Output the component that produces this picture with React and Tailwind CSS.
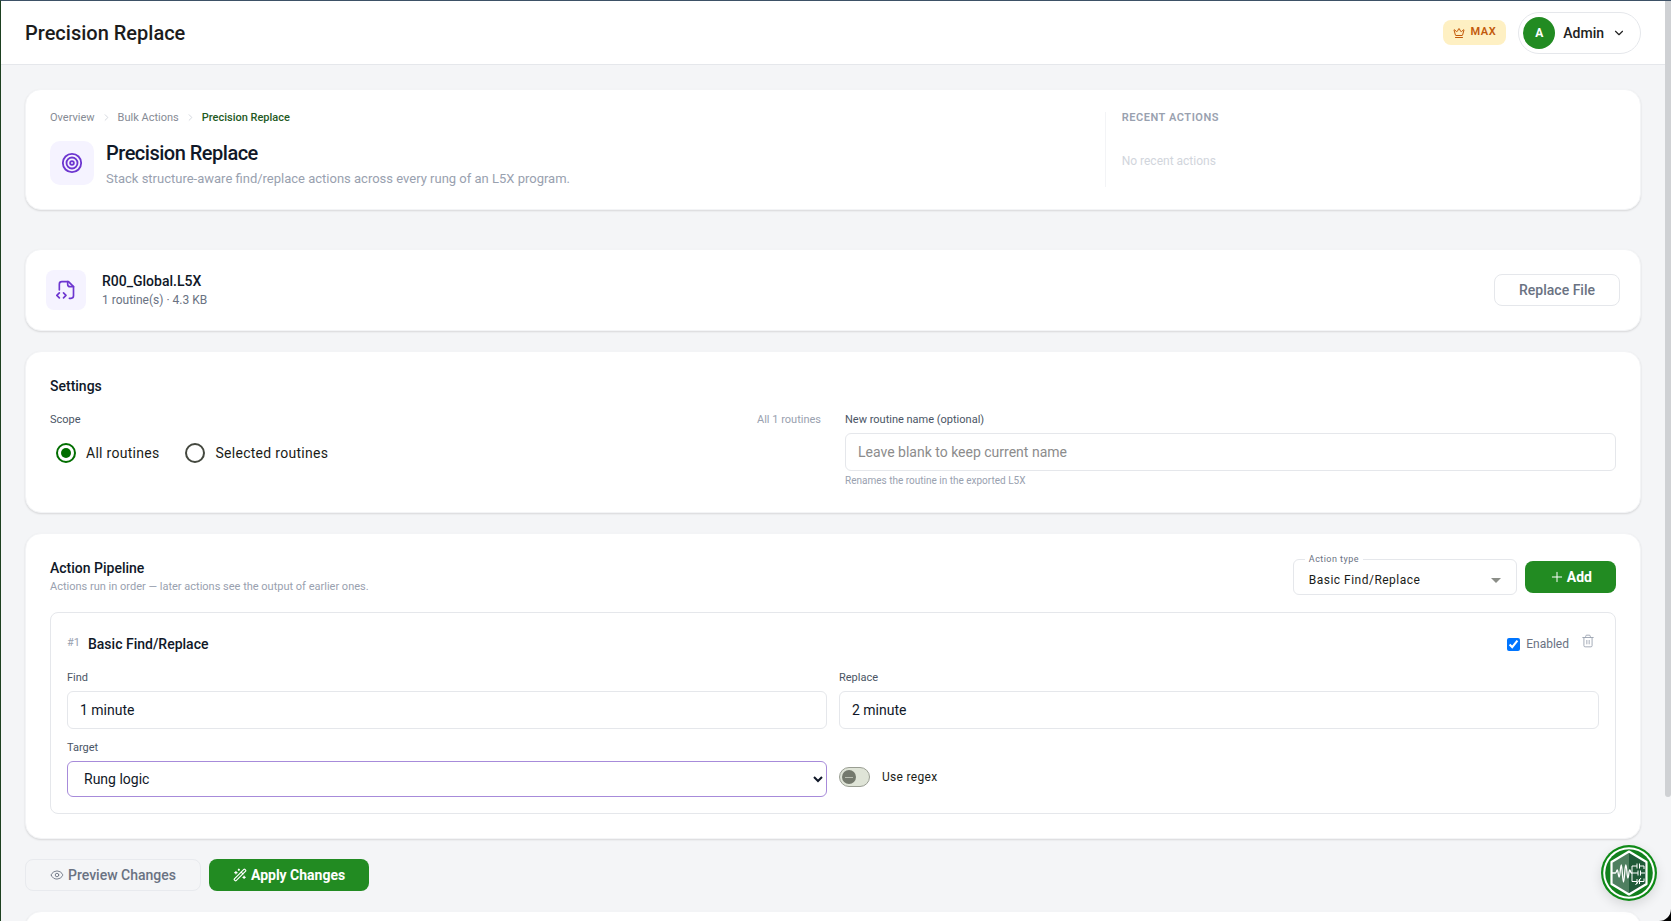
import { useState } from 'react';
import { ChevronDown, ChevronRight, Crown, Eye, Plus, Target, Trash2, WandSparkles } from 'lucide-react';

const CRUMBS = ['Overview', 'Bulk Actions'];

const ACTION_TYPES = ['Basic Find/Replace', 'Regex Replace', 'Increment Address'];
const TARGETS = ['Rung logic', 'Rung comments', 'Tag names'];

const CARD = 'rounded-2xl border border-gray-100 bg-white shadow-[0_1px_2px_rgba(0,0,0,0.12)]';
const LABEL = 'text-[11px] leading-4 text-gray-600';
const INPUT =
  'mt-[5px] block h-[38px] w-full rounded-md border border-gray-200 bg-white px-3 text-sm text-gray-900 outline-none placeholder:text-[#8c8c8c]';

function FileCodeIcon({ className }) {
  return (
    <svg className={className} viewBox="0 0 24 24" fill="none" stroke="currentColor" strokeWidth="2" strokeLinecap="round" strokeLinejoin="round">
      <path d="M4 12V5a3 3 0 0 1 3-3h8l6 6v11a3 3 0 0 1-3 3h-2" />
      <path d="M14 2v3a3 3 0 0 0 3 3h4" />
      <path d="m4 15.500-3 3 3 3" />
      <path d="m9 21.500 3-3-3-3" />
    </svg>
  );
}

function AssistantLogo() {
  return (
    <svg className="size-14" viewBox="0 0 56 56" fill="none">
      <circle cx="28" cy="28" r="28" fill="#0f8a17" />
      <circle cx="28" cy="28" r="25.800" fill="#fff" />
      <circle cx="28" cy="28" r="23.800" fill="#12801d" />
      <path d="M28 7 45.500 17v22L28 49 10.500 39V17z" fill="#4f7f60" />
      <path d="M28 7 45.500 17v22L28 49z" fill="#1f5a38" />
      <path d="M28 6.500 45.500 17v22L28 49.500 10.500 39V17z" stroke="#fff" strokeWidth="2.200" strokeLinejoin="round" />
      <path
        d="M11 28h3.500c1 0 1-3 1.800-3s1 7 1.900 7 1.200-12 2.100-12 1.200 17 2.200 17 1.300-17 2.300-17 1.200 13 2.100 13 .9-8 1.800-8 .8 3 1.600 3H31"
        stroke="#fff"
        strokeWidth="1.300"
        strokeLinejoin="round"
      />
      <path
        d="M31 28v-7h5m2.500 0H43v3M36 18.500v5m2.500-5v5M31 28h6m2.500 0H44M37 25.500v5m2.500-5v5M31 28v8.500h5m2.500 0H43v-3M36 34v5m2.500-5v5M34.500 40l5.500-7"
        stroke="#fff"
        strokeWidth="1"
      />
    </svg>
  );
}

function TopBar() {
  return (
    <header className="flex h-16 shrink-0 items-center justify-between border-b border-gray-200 bg-white px-6">
      <h1 className="text-xl font-medium text-[#1c1c1c]">Precision Replace</h1>
      <div className="flex items-center gap-3">
        <span className="flex h-[25px] items-center gap-1.5 rounded-lg bg-[#fef0c3] px-2.5 text-[11px] font-semibold tracking-wider text-[#c2590b]">
          <Crown className="size-3" />
          MAX
        </span>
        <button className="flex h-[42px] items-center gap-2 rounded-full border border-gray-200 pr-3.5 pl-1 text-sm font-medium text-[#222]">
          <span className="flex size-8 items-center justify-center rounded-full bg-[#228b22] text-xs font-bold text-white">A</span>
          Admin
          <ChevronDown className="size-3.5" />
        </button>
      </div>
    </header>
  );
}

function PageHeader() {
  return (
    <section className={`${CARD} grid grid-cols-[2fr_1fr] gap-8 px-6`}>
      <div className="py-5">
        <nav className="mb-4 flex items-center gap-1.5 text-[11px] leading-[15px] text-gray-400">
          {CRUMBS.map((crumb) => (
            <span key={crumb} className="flex items-center gap-1.5">
              <a href="#" className="text-[#868b95]">{crumb}</a>
              <ChevronRight className="size-[11px] text-gray-300" />
            </span>
          ))}
          <span className="font-medium text-[#1f5a24]">Precision Replace</span>
        </nav>
        <div className="flex items-start gap-3">
          <div className="flex size-11 items-center justify-center rounded-[10px] bg-[#f5f3ff] text-[#6d36d0]">
            <Target className="size-[22px]" />
          </div>
          <div>
            <h2 className="text-xl leading-6 font-medium tracking-tight text-gray-900">Precision Replace</h2>
            <p className="mt-1 text-[13px] leading-5 text-gray-400">
              Stack structure-aware find/replace actions across every rung of an L5X program.
            </p>
          </div>
        </div>
      </div>
      <aside className="my-[22px] border-l border-gray-100 pl-4">
        <h3 className="text-[11px] leading-3 font-semibold tracking-wider text-gray-400 uppercase">Recent Actions</h3>
        <p className="mt-[29px] text-xs text-gray-300">No recent actions</p>
      </aside>
    </section>
  );
}

function FileCard() {
  return (
    <section className={`${CARD} mt-[19px] flex items-center justify-between p-5`}>
      <div className="flex items-center gap-4">
        <div className="flex size-10 items-center justify-center rounded-lg bg-[#f5f3ff] text-[#6d36d0]">
          <FileCodeIcon className="size-5" />
        </div>
        <div>
          <h2 className="text-sm leading-5 font-medium text-gray-900">R00_Global.L5X</h2>
          <p className="text-xs leading-[18px] text-gray-500">1 routine(s) · 4.3 KB</p>
        </div>
      </div>
      <button className="h-8 rounded-lg border border-gray-200 bg-white px-6 text-sm font-medium text-gray-500">
        Replace File
      </button>
    </section>
  );
}

function ScopeRadio({ label, checked, onChange }) {
  return (
    <label className="flex items-center gap-2.5 text-sm leading-5 tracking-[0.02em] text-[#1a1c18]">
      <input
        type="radio"
        name="scope"
        checked={checked}
        onChange={onChange}
        className="grid size-5 appearance-none place-content-center rounded-full border-2 border-[#44483f] before:size-2.5 before:rounded-full checked:border-[#026e00] checked:before:bg-[#026e00]"
      />
      {label}
    </label>
  );
}

function SettingsCard() {
  const [scope, setScope] = useState('all');

  return (
    <section className={`${CARD} p-6`}>
      <h2 className="text-sm font-medium text-gray-900">Settings</h2>
      <div className="mt-4 grid grid-cols-2 gap-6">
        <div>
          <div className="flex justify-between">
            <span className={LABEL}>Scope</span>
            <span className="text-[11px] leading-4 text-gray-400">All 1 routines</span>
          </div>
          <div className="mt-[15px] flex gap-[26px] pl-1.5">
            <ScopeRadio label="All routines" checked={scope === 'all'} onChange={() => setScope('all')} />
            <ScopeRadio label="Selected routines" checked={scope === 'selected'} onChange={() => setScope('selected')} />
          </div>
        </div>
        <div>
          <label htmlFor="routine-name" className={`${LABEL} block`}>New routine name (optional)</label>
          <input id="routine-name" type="text" placeholder="Leave blank to keep current name" className={INPUT} />
          <p className="mt-[3px] text-[10px] leading-[14px] text-gray-400">Renames the routine in the exported L5X</p>
        </div>
      </div>
    </section>
  );
}

function ActionItem() {
  const [enabled, setEnabled] = useState(true);
  const [regex, setRegex] = useState(false);

  return (
    <div className="mt-4 rounded-lg border border-gray-200 p-4">
      <div className="mb-[11px] flex h-[30px] items-center justify-between">
        <div className="flex items-center gap-2">
          <span className="pb-0.5 text-[11px] text-gray-400">#1</span>
          <h3 className="text-sm font-medium text-gray-900">Basic Find/Replace</h3>
        </div>
        <div className="flex items-center gap-3 pr-1">
          <label className="flex items-center gap-1.5 text-xs text-gray-500">
            <input type="checkbox" checked={enabled} onChange={(e) => setEnabled(e.target.checked)} className="size-[13px]" />
            Enabled
          </label>
          <button aria-label="Remove action" className="pb-1.5 text-gray-400">
            <Trash2 className="size-3.5" strokeWidth={1.500} />
          </button>
        </div>
      </div>
      <div className="grid grid-cols-2 gap-x-3 gap-y-[11px]">
        <div>
          <label htmlFor="find" className={`${LABEL} block`}>Find</label>
          <input id="find" type="text" defaultValue="1 minute" className={INPUT} />
        </div>
        <div>
          <label htmlFor="replace" className={`${LABEL} block`}>Replace</label>
          <input id="replace" type="text" defaultValue="2 minute" className={INPUT} />
        </div>
        <div>
          <label htmlFor="target" className={`${LABEL} block`}>Target</label>
          <select id="target" className="mt-[5px] block h-9 w-full rounded-md border border-[#a78bda] bg-white pl-3 text-sm text-gray-900 outline-none">
            {TARGETS.map((t) => <option key={t}>{t}</option>)}
          </select>
        </div>
        <div className="flex h-10 items-center gap-3 self-end">
          <button
            id="use-regex"
            role="switch"
            aria-checked={regex}
            onClick={() => setRegex(!regex)}
            className={`flex h-5 w-[31px] items-center rounded-full border border-[#9a9e93] bg-[#dfe4d7] px-0.5 ${regex ? 'justify-end' : ''}`}
          >
            <span className="flex size-3.5 items-center justify-center rounded-full bg-[#74796d]">
              <span className="h-px w-2 bg-[#b9beb1]" />
            </span>
          </button>
          <label htmlFor="use-regex" className="text-xs tracking-wide text-[#1a1c18]">Use regex</label>
        </div>
      </div>
    </div>
  );
}

function PipelineCard() {
  return (
    <section className={`${CARD} p-6`}>
      <div className="flex items-center justify-between">
        <div>
          <h2 className="text-sm font-medium text-gray-900">Action Pipeline</h2>
          <p className="text-[11px] leading-[18px] text-gray-400">
            Actions run in order — later actions see the output of earlier ones.
          </p>
        </div>
        <div className="flex items-center gap-2">
          <div className="relative w-56">
            <label htmlFor="action-type" className="absolute -top-1.5 left-3 bg-white px-1 text-[9px] leading-3 tracking-wider text-gray-500">
              Action type
            </label>
            <select id="action-type" className="block h-9 w-full appearance-none rounded-md border border-gray-200 bg-white pt-1.5 pl-[15px] text-xs tracking-[0.04em] text-[#1a1c18] outline-none">
              {ACTION_TYPES.map((t) => <option key={t}>{t}</option>)}
            </select>
            <svg className="pointer-events-none absolute top-[19px] right-4 h-[5px] w-2.5 text-[#8b8e88]" viewBox="0 0 10 5" fill="currentColor">
              <path d="M0 0h10L5 5z" />
            </svg>
          </div>
          <button className="flex h-8 items-center gap-0.5 rounded-lg bg-[#228b22] px-6 text-sm font-bold text-white">
            <Plus className="size-4" strokeWidth={1.500} />
            Add
          </button>
        </div>
      </div>
      <ActionItem />
    </section>
  );
}

export default function App() {
  return (
    <div className="h-screen bg-black font-[Roboto,sans-serif]">
      <div className="relative flex h-full overflow-hidden rounded-br-xl border-t border-l border-t-[#3d5166] border-l-[#1d4020] bg-[#f4f5f7]">
        <div className="flex min-w-0 flex-1 flex-col">
          <TopBar />
          <main className="flex flex-1 flex-col gap-5 overflow-hidden px-6 pt-6 *:shrink-0">
            <PageHeader />
            <FileCard />
            <SettingsCard />
            <PipelineCard />
            <div className="flex gap-2">
              <button className="flex h-8 items-center gap-1 rounded-lg border border-[#e8eaee] px-6 text-sm font-medium text-gray-500">
                <Eye className="size-3.5" strokeWidth={1.500} />
                Preview Changes
              </button>
              <button className="flex h-8 items-center gap-1 rounded-lg bg-[#228b22] px-6 text-sm font-bold text-white">
                <WandSparkles className="size-3.5" strokeWidth={2} />
                Apply Changes
              </button>
            </div>
            <section className={`${CARD} h-40`} />
          </main>
        </div>
        <div className="w-1.5">
          <div className="h-[86.5%] rounded-b-full bg-[#cfd1d4]" />
        </div>
        <button aria-label="Open assistant" className="absolute right-3.5 bottom-5 rounded-full shadow-[0_4px_12px_rgba(0,0,0,0.12)]">
          <AssistantLogo />
        </button>
      </div>
    </div>
  );
}
